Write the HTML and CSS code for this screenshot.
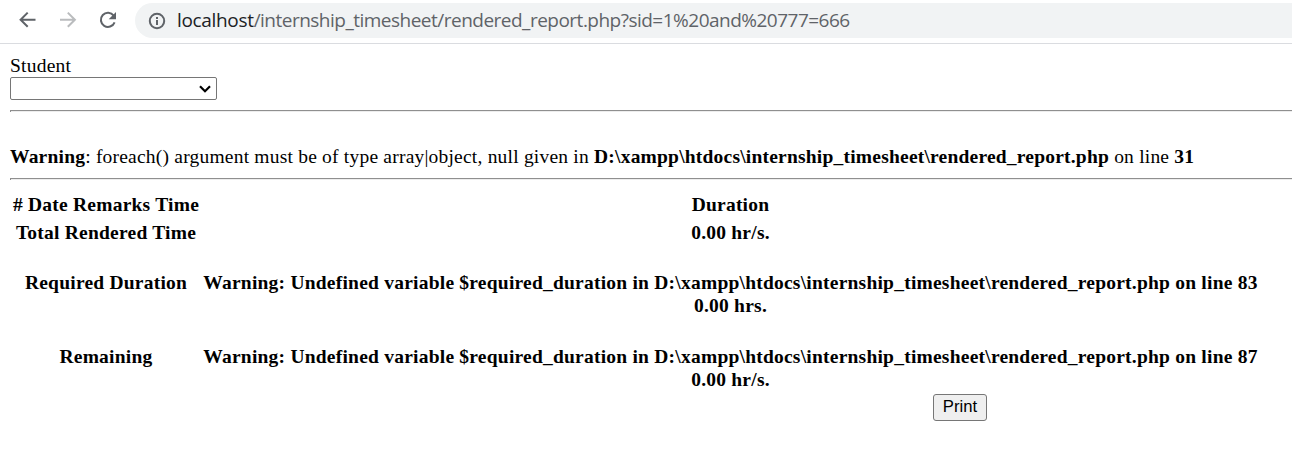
FILE: index.html
```html
<!DOCTYPE html>
<html lang="en">
<head>
<meta charset="utf-8">
<title>Rendered Report</title>
<link rel="stylesheet" href="styles.css">
</head>
<body>
<header class="toolbar">
  <svg class="nav" width="120" height="43" viewBox="0 0 120 43" fill="none" stroke-width="2">
    <path class="ink" d="M35.5 19.7H21M27.7 12.6 20.6 19.7l7.1 7.1"/>
    <path class="faint" d="M60 19.7h14.500M67.800 12.600l7.100 7.100-7.100 7.100"/>
    <path class="ink" d="M113.700 15.600A7.100 7.100 0 1 0 114.600 22.400"/>
    <path class="tip" d="M116 12v7.300h-7.300z"/>
  </svg>
  <div class="address">
    <svg class="info" width="18" height="18" viewBox="0 0 18 18" fill="none" stroke-width="2">
      <circle class="ink" cx="9" cy="9" r="7.200"/>
      <path class="ink" d="M9 8v5M9 5v1.900"/>
    </svg>
    <div class="url"><span class="host">localhost</span>/internship_timesheet/rendered_report.php?sid=1%20and%20777=666</div>
  </div>
</header>
<main class="page">
  <div class="student">Student</div>
  <div class="select">
    <svg width="12" height="8" viewBox="0 0 12 8" fill="none"><path d="M1 1.200 6 6.200l5-5" stroke="#000" stroke-width="2.200"/></svg>
  </div>
  <hr class="rule">
  <div class="warning"><b>Warning</b>: foreach() argument must be of type array|object, null given in <b>D:\xampp\htdocs\internship_timesheet\rendered_report.php</b> on line <b>31</b></div>
  <hr class="rule second">
  <div class="report">
    <div class="head">&#35; Date Remarks Time</div>
    <div class="head">Duration</div>
    <div class="total">Total Rendered Time</div>
    <div class="total">0.00 hr/s.</div>
    <div class="block">Required Duration</div>
    <div class="block">Warning: Undefined variable $required_duration in D:\xampp\htdocs\internship_timesheet\rendered_report.php on line 83<br>0.00 hrs.</div>
    <div class="block">Remaining</div>
    <div class="block">Warning: Undefined variable $required_duration in D:\xampp\htdocs\internship_timesheet\rendered_report.php on line 87<br>0.00 hr/s.</div>
  </div>
  <button class="print">Print</button>
</main>
</body>
</html>
```
FILE: styles.css
```css
* { box-sizing: border-box; }
body { margin: 0; background: #fff; color: #000; overflow: hidden; }
.toolbar { display: flex; height: 44px; border-bottom: 1px solid #dadce0; }
.nav { flex: none; }
.ink { stroke: #5f6368; }
.faint { stroke: #babcbe; }
.tip { fill: #5f6368; }
.address { display: flex; align-items: center; flex: 1; height: 35px; margin: 3px 0 0 15px; padding-left: 13px; background: #f1f3f4; border-radius: 18px 0 0 18px; }
.info { flex: none; margin-right: 11px; }
.url { font: 19px/35px "Open Sans", sans-serif; letter-spacing: -0.51px; color: #5f6368; white-space: nowrap; }
.host { color: #202124; letter-spacing: -0.33px; }
.page { padding: 10px 0 0 10px; font: 19.5px/23px "Liberation Serif", serif; letter-spacing: 0.225px; white-space: nowrap; }
.select { display: flex; align-items: center; justify-content: flex-end; width: 207px; height: 23px; padding-right: 5px; border: 1px solid #767676; border-radius: 2px; }
.rule { height: 2px; margin: 10px 0 0; border: 0; border-top: 1px solid #8f8f8f; border-left: 1px solid #8f8f8f; background: #ededed; }
.warning { margin-top: 33px; letter-spacing: 0.21px; }
.rule.second { margin-top: 10px; }
.report { display: grid; grid-template-columns: 192px 1057px; padding-top: 13px; font-weight: bold; text-align: center; }
.head, .total { height: 28px; }
.block { height: 74px; padding-top: 22px; }
.print { display: block; width: 54px; height: 27px; margin: -3px 0 0 923px; padding: 0 0 2px; background: #efefef; border: 1px solid #767676; border-radius: 3px; font: 16.700px/23px "Liberation Sans", sans-serif; color: #000; }
```
